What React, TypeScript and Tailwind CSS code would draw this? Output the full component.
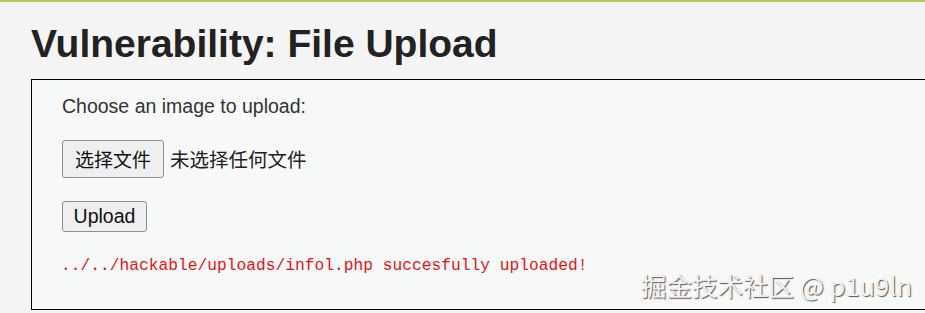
export default function App() {
  return (
    <div className="h-[313px] w-[925px] overflow-hidden bg-[#f4f4f4] border-t-2 border-[#b8c95c] font-['Liberation_Sans',Arial,sans-serif]">
      <div className="pl-[31px]">
        <h1 className="pt-[20px] text-[39px] font-bold leading-[44px] text-[#222]">
          Vulnerability: File Upload
        </h1>
        <div className="relative mt-[13px] h-[231px] border border-black border-r-0 bg-[#f7f8f8] pl-[30px] pt-[13px]">
          <p className="text-[19.5px] leading-[26px] text-[#333]">Choose an image to upload:</p>
          <div className="mt-[21px] flex items-center gap-[6px]">
            <button className="h-[38px] w-[102px] rounded-[3px] border border-[#8f8f8f] bg-[#efefef] text-[19px] text-[#111] font-['Noto_Sans_CJK_SC',sans-serif]">
              选择文件
            </button>
            <span className="text-[19.5px] text-[#222] font-['Noto_Sans_CJK_SC',sans-serif]">未选择任何文件</span>
          </div>
          <button className="mt-[23px] h-[31px] w-[85px] rounded-[3px] border border-[#8f8f8f] bg-[#efefef] text-[19.5px] text-[#111]">
            Upload
          </button>
          <pre className="mt-[23px] -ml-px text-[16.25px] leading-[22px] text-[#ee1111] font-['Liberation_Mono',monospace]">
            ../../hackable/uploads/infol.php succesfully uploaded!
          </pre>
          <div className="absolute bottom-[9px] right-[13px] text-[25.5px] leading-[30px] text-[#f2f2f2] [text-shadow:1px_1px_1px_#555] font-['Noto_Sans_CJK_SC',sans-serif]">
            掘金技术社区 @ p1u9ln
          </div>
        </div>
      </div>
    </div>
  );
}
